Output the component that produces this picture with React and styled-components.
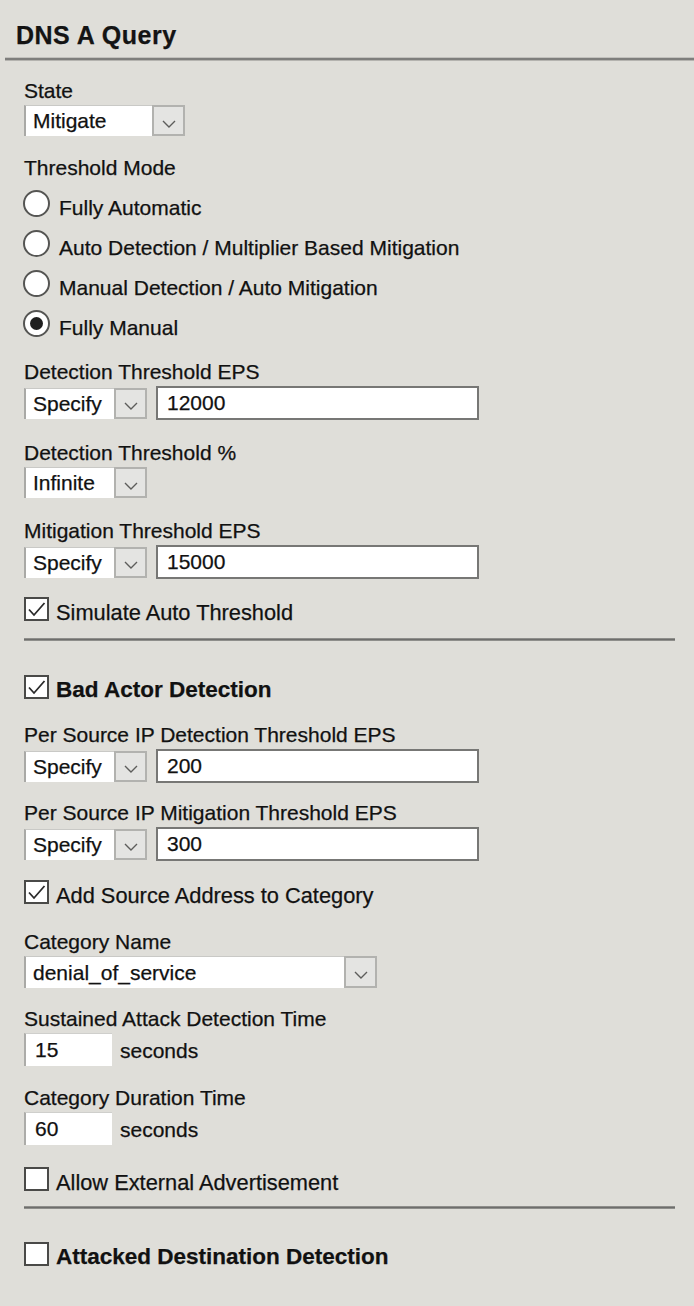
import React from "react";
import styled, { createGlobalStyle } from "styled-components";

const GlobalStyle = createGlobalStyle`
  html, body {
    margin: 0;
    padding: 0;
    background: #dfded9;
  }
  body {
    font-family: "Liberation Sans", Arial, sans-serif;
    color: #111;
    -webkit-text-stroke: 0.25px #111;
  }
  * { box-sizing: border-box; }
`;

const Page = styled.div`
  width: 694px;
  min-height: 1306px;
  background: #dfded9;
`;

const Header = styled.header`
  padding: 20px 0 0 0;
`;

const Title = styled.h1`
  margin: 0 0 0 16px;
  font-size: 25px;
  line-height: 30px;
  font-weight: bold;
  letter-spacing: 0.5px;
  color: #141414;
`;

const TopRule = styled.div`
  margin: 8px 0 0 5px;
  height: 2px;
  background: #7e7e7c;
  box-shadow: 0 1px 0 #b4b3af, 0 -1px 0 #c2c1bd;
`;

const Form = styled.div`
  display: flex;
  flex-direction: column;
  padding: 19px 19px 0 24px;
`;

const Field = styled.div`
  display: flex;
  flex-direction: column;
  align-items: flex-start;
  margin-top: ${(p) => p.$mt || 0}px;
`;

const Label = styled.div`
  font-size: 21px;
  line-height: 24px;
  white-space: nowrap;
`;

const ControlRow = styled.div`
  display: flex;
  align-items: center;
  gap: 9px;
  margin-top: 2px;
`;

const SelectBox = styled.div`
  display: flex;
  width: ${(p) => p.$w}px;
  height: ${(p) => p.$h || 31}px;
  background: #fff;
  border-left: 2px solid #a9a9a6;
  border-top: 1px solid #c9c9c6;
`;

const SelectValue = styled.div`
  flex: 1;
  padding-left: 7px;
  font-size: 21px;
  line-height: ${(p) => (p.$h || 31) - 1}px;
  white-space: nowrap;
  overflow: hidden;
`;

const SelectArrow = styled.div`
  width: 33px;
  flex: none;
  margin-top: -1px;
  background: #e4e4e2;
  border: 2px solid #b2b2af;
  display: flex;
  align-items: center;
  justify-content: center;
  padding-top: 6px;
`;

const TextField = styled.div`
  width: ${(p) => p.$w}px;
  height: 34px;
  background: #fff;
  border: 2px solid #777775;
  padding-left: 9px;
  font-size: 21px;
  line-height: 30px;
`;

const NumField = styled.div`
  width: 88px;
  height: 33px;
  background: #fff;
  border-left: 2px solid #acaca9;
  border-top: 1px solid #cfcfcc;
  padding-left: 9px;
  font-size: 21px;
  line-height: 32px;
`;

const Unit = styled.span`
  font-size: 21px;
  line-height: 24px;
  margin-left: -1px;
  padding-top: 2px;
`;

const RadioGroup = styled.div`
  display: flex;
  flex-direction: column;
  gap: 10px;
  margin-top: 10px;
`;

const RadioRow = styled.div`
  display: flex;
  align-items: flex-start;
  height: 30px;
  gap: 9px;
`;

const RadioCircle = styled.span`
  width: 27px;
  height: 27px;
  flex: none;
  border-radius: 50%;
  background: #fff;
  border: 2px solid #555553;
  display: flex;
  align-items: center;
  justify-content: center;
  margin-left: -1px;
  &::after {
    content: "";
    width: 13px;
    height: 13px;
    border-radius: 50%;
    background: ${(p) => (p.$checked ? "#1e1e1e" : "transparent")};
  }
`;

const RadioText = styled.span`
  font-size: 21px;
  line-height: 30px;
  margin-top: 3px;
  white-space: nowrap;
`;

const CheckRow = styled.div`
  display: flex;
  align-items: flex-start;
  gap: 7px;
  height: 28px;
  margin-top: ${(p) => p.$mt || 0}px;
`;

const CheckBox = styled.span`
  width: 25px;
  height: 24px;
  flex: none;
  background: #fff;
  border: 2px solid #4a4a48;
  display: flex;
  align-items: center;
  justify-content: center;
`;

const CheckText = styled.span`
  font-size: ${(p) => (p.$bold ? 22.5 : 21.8)}px;
  font-weight: ${(p) => (p.$bold ? "bold" : "normal")};
  line-height: 28px;
  padding-top: ${(p) => (p.$bold ? 1 : 2)}px;
  white-space: nowrap;
`;

const Rule = styled.div`
  height: 3px;
  margin-top: ${(p) => p.$mt}px;
  background: #6e6e6c;
  border-top: 1px solid #8e8e8b;
  border-bottom: 1px solid #8e8e8b;
`;

const Chevron = () => (
  <svg width="14" height="8" viewBox="0 0 14 8">
    <path d="M1 1 L7 7 L13 1" fill="none" stroke="#5d5d5b" strokeWidth="1.4" />
  </svg>
);

const Check = () => (
  <svg width="19" height="17" viewBox="0 0 19 17">
    <path d="M2 8.5 L7 14 L17.5 2" fill="none" stroke="#2a2a2a" strokeWidth="1.8" />
  </svg>
);

const Select = ({ value, w, h }) => (
  <SelectBox $w={w} $h={h}>
    <SelectValue $h={h}>{value}</SelectValue>
    <SelectArrow>
      <Chevron />
    </SelectArrow>
  </SelectBox>
);

const Radio = ({ label, checked }) => (
  <RadioRow>
    <RadioCircle $checked={checked} />
    <RadioText>{label}</RadioText>
  </RadioRow>
);

const Checkbox = ({ label, checked, bold, mt }) => (
  <CheckRow $mt={mt}>
    <CheckBox>{checked && <Check />}</CheckBox>
    <CheckText $bold={bold}>{label}</CheckText>
  </CheckRow>
);

const ThresholdField = ({ label, value, mt }) => (
  <Field $mt={mt}>
    <Label>{label}</Label>
    <ControlRow>
      <Select value="Specify" w={123} />
      <TextField $w={323}>{value}</TextField>
    </ControlRow>
  </Field>
);

const SecondsField = ({ label, value, mt }) => (
  <Field $mt={mt}>
    <Label>{label}</Label>
    <ControlRow>
      <NumField>{value}</NumField>
      <Unit>seconds</Unit>
    </ControlRow>
  </Field>
);

export default function App() {
  return (
    <Page>
      <GlobalStyle />
      <Header>
        <Title>DNS A Query</Title>
        <TopRule />
      </Header>
      <Form>
        <Field>
          <Label>State</Label>
          <ControlRow>
            <Select value="Mitigate" w={161} />
          </ControlRow>
        </Field>

        <Field $mt={20}>
          <Label>Threshold Mode</Label>
          <RadioGroup>
            <Radio label="Fully Automatic" />
            <Radio label="Auto Detection / Multiplier Based Mitigation" />
            <Radio label="Manual Detection / Auto Mitigation" />
            <Radio label="Fully Manual" checked />
          </RadioGroup>
        </Field>

        <ThresholdField label="Detection Threshold EPS" value="12000" mt={20} />

        <Field $mt={21}>
          <Label>Detection Threshold %</Label>
          <ControlRow>
            <Select value="Infinite" w={123} />
          </ControlRow>
        </Field>

        <ThresholdField label="Mitigation Threshold EPS" value="15000" mt={21} />

        <Checkbox label="Simulate Auto Threshold" checked mt={18} />

        <Rule $mt={13} />

        <Checkbox label="Bad Actor Detection" checked bold mt={34} />

        <ThresholdField label="Per Source IP Detection Threshold EPS" value="200" mt={20} />
        <ThresholdField label="Per Source IP Mitigation Threshold EPS" value="300" mt={18} />

        <Checkbox label="Add Source Address to Category" checked mt={19} />

        <Field $mt={22}>
          <Label>Category Name</Label>
          <ControlRow>
            <Select value="denial_of_service" w={353} h={32} />
          </ControlRow>
        </Field>

        <SecondsField label="Sustained Attack Detection Time" value="15" mt={19} />
        <SecondsField label="Category Duration Time" value="60" mt={20} />

        <Checkbox label="Allow External Advertisement" mt={22} />

        <Rule $mt={11} />

        <Checkbox label="Attacked Destination Detection" bold mt={33} />
      </Form>
    </Page>
  );
}
